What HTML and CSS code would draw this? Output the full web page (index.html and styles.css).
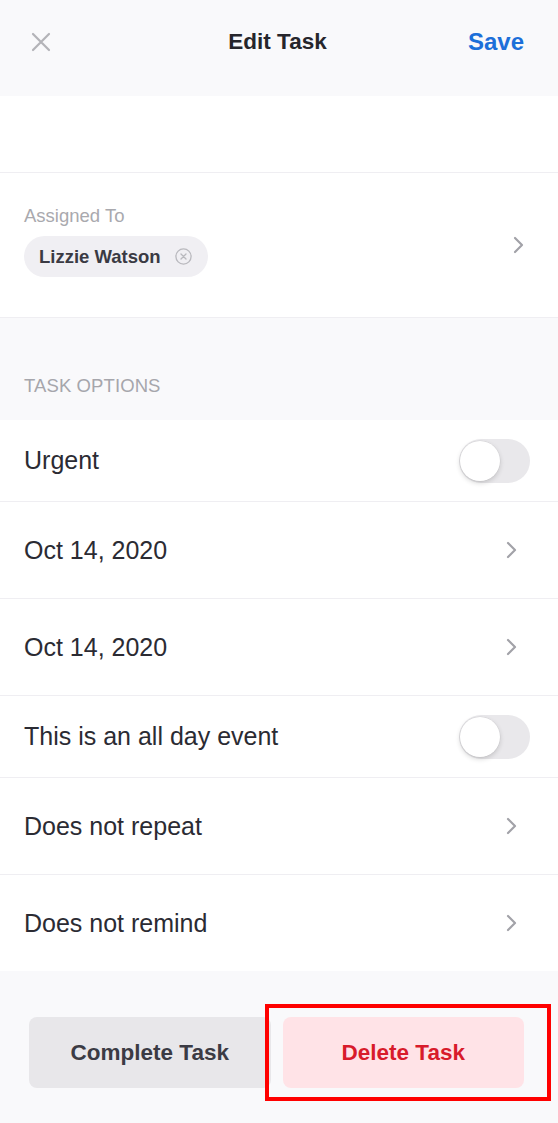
FILE: index.html
```html
<!DOCTYPE html>
<html lang="en">
<head>
<meta charset="utf-8">
<title>Edit Task</title>
<link rel="stylesheet" href="styles.css">
</head>
<body>
<div class="screen">
  <header class="topbar">
    <div class="topbar-row">
      <div class="side side-left">
        <button class="icon-btn close" aria-label="Close">
          <svg width="20" height="20" viewBox="0 0 20 20"><path d="M2 2 L18 18 M18 2 L2 18" stroke="#b3b3b8" stroke-width="2.2" stroke-linecap="round" fill="none"/></svg>
        </button>
      </div>
      <h1 class="title">Edit Task</h1>
      <div class="side side-right">
        <button class="save">Save</button>
      </div>
    </div>
  </header>

  <section class="title-field"></section>

  <section class="assigned">
    <div class="assigned-body">
      <div class="label">Assigned To</div>
      <div class="chip">
        <span class="chip-text">Lizzie Watson</span>
        <svg class="chip-x" width="17" height="17" viewBox="0 0 17 17"><circle cx="8.5" cy="8.5" r="7.6" stroke="#b9b9be" stroke-width="1.3" fill="none"/><path d="M6 6 L11 11 M11 6 L6 11" stroke="#b9b9be" stroke-width="1.3" stroke-linecap="round"/></svg>
      </div>
    </div>
    <svg class="chev chev-assigned" width="11" height="18" viewBox="0 0 11 18"><polyline points="2,2 9,9 2,16" fill="none" stroke="#a2a2a8" stroke-width="2.2" stroke-linecap="round" stroke-linejoin="round"/></svg>
  </section>

  <div class="section-head">TASK OPTIONS</div>

  <ul class="options">
    <li class="row row-toggle">
      <span class="row-text">Urgent</span>
      <span class="toggle"><span class="knob"></span></span>
    </li>
    <li class="row row-link">
      <span class="row-text">Oct 14, 2020</span>
      <svg class="chev" width="11" height="18" viewBox="0 0 11 18"><polyline points="2,2 9,9 2,16" fill="none" stroke="#a2a2a8" stroke-width="2.2" stroke-linecap="round" stroke-linejoin="round"/></svg>
    </li>
    <li class="row row-link">
      <span class="row-text">Oct 14, 2020</span>
      <svg class="chev" width="11" height="18" viewBox="0 0 11 18"><polyline points="2,2 9,9 2,16" fill="none" stroke="#a2a2a8" stroke-width="2.2" stroke-linecap="round" stroke-linejoin="round"/></svg>
    </li>
    <li class="row row-toggle">
      <span class="row-text">This is an all day event</span>
      <span class="toggle"><span class="knob"></span></span>
    </li>
    <li class="row row-link">
      <span class="row-text">Does not repeat</span>
      <svg class="chev" width="11" height="18" viewBox="0 0 11 18"><polyline points="2,2 9,9 2,16" fill="none" stroke="#a2a2a8" stroke-width="2.2" stroke-linecap="round" stroke-linejoin="round"/></svg>
    </li>
    <li class="row row-link row-last">
      <span class="row-text">Does not remind</span>
      <svg class="chev" width="11" height="18" viewBox="0 0 11 18"><polyline points="2,2 9,9 2,16" fill="none" stroke="#a2a2a8" stroke-width="2.2" stroke-linecap="round" stroke-linejoin="round"/></svg>
    </li>
  </ul>

  <footer class="actions">
    <button class="btn btn-complete">Complete Task</button>
    <button class="btn btn-delete">Delete Task</button>
    <div class="highlight"></div>
  </footer>
</div>
</body>
</html>
```

FILE: styles.css
```css
* { box-sizing: border-box; }
html, body {
  margin: 0;
  padding: 0;
  background: #f9f9fb;
}
body {
  font-family: "Liberation Sans", Arial, sans-serif;
  color: #2b2b33;
}
.screen {
  width: 558px;
  height: 1123px;
  overflow: hidden;
  background: #f9f9fb;
  display: flex;
  flex-direction: column;
}
button {
  font-family: inherit;
  border: none;
  background: none;
  padding: 0;
  cursor: pointer;
}

/* Header */
.topbar {
  height: 96px;
  background: #f9f9fb;
}
.topbar-row {
  height: 84px;
  display: flex;
  align-items: center;
  padding: 0 34px 0 31px;
}
.side {
  flex: 1;
  display: flex;
  align-items: center;
}
.side-right { justify-content: flex-end; }
.icon-btn { width: 20px; height: 20px; display: flex; }
.title {
  margin: 0;
  font-size: 22.5px;
  font-weight: bold;
  color: #26262c;
}
.save {
  font-size: 24px;
  font-weight: bold;
  color: #1c6fd9;
}

/* Title field */
.title-field {
  height: 77px;
  background: #fff;
  border-bottom: 1px solid #efeef2;
}

/* Assigned */
.assigned {
  height: 145px;
  background: #fff;
  border-bottom: 1px solid #efeef2;
  display: flex;
  align-items: center;
  justify-content: space-between;
  padding: 0 34px 0 24px;
}
.assigned-body {
  display: flex;
  flex-direction: column;
  align-items: flex-start;
  gap: 9px;
  padding-bottom: 8px;
}
.label {
  font-size: 18.5px;
  line-height: 22px;
  color: #a9a9ae;
}
.chip {
  height: 41px;
  border-radius: 21px;
  background: #f0eff3;
  display: flex;
  align-items: center;
  gap: 14px;
  padding: 0 16px 0 15px;
}
.chip-text {
  font-size: 18.5px;
  font-weight: bold;
  color: #3a3a43;
}
.chip-x { display: block; }
.chev { display: block; flex: none; }

/* Section head */
.section-head {
  height: 102px;
  padding: 57px 24px 0;
  font-size: 18.5px;
  line-height: 22px;
  color: #a6a6ac;
  letter-spacing: 0.1px;
}

/* Options */
.options {
  list-style: none;
  margin: 0;
  padding: 0;
  background: #fff;
}
.row {
  display: flex;
  align-items: center;
  justify-content: space-between;
  padding-left: 24px;
  border-bottom: 1px solid #efeef2;
}
.row-toggle { height: 82px; padding-right: 28px; }
.row-link { height: 97px; padding-right: 41px; }
.row-last { border-bottom: none; height: 96px; }
.row-text {
  font-size: 25px;
  color: #2b2b33;
}
.toggle {
  position: relative;
  width: 71px;
  height: 44px;
  border-radius: 22px;
  background: #e9e8eb;
  display: block;
}
.knob {
  position: absolute;
  left: 1px;
  top: 2px;
  width: 40px;
  height: 40px;
  border-radius: 50%;
  background: #fff;
  box-shadow: 0 2px 5px rgba(0, 0, 0, 0.16), 0 0 0 0.5px rgba(0, 0, 0, 0.06);
}

/* Footer actions */
.actions {
  position: relative;
  flex: 1;
  display: flex;
  gap: 12px;
  padding: 46px 34px 0 29px;
  background: #f9f9fb;
}
.btn {
  flex: 1;
  height: 71px;
  border-radius: 8px;
  font-size: 22.5px;
  font-weight: bold;
}
.btn-complete {
  background: #e8e7ea;
  color: #3b3b44;
}
.btn-delete {
  background: #ffe3e7;
  color: #d81b2b;
}
.highlight {
  position: absolute;
  left: 265px;
  top: 33px;
  width: 286px;
  height: 97px;
  border: 4px solid #ff0000;
}
```
